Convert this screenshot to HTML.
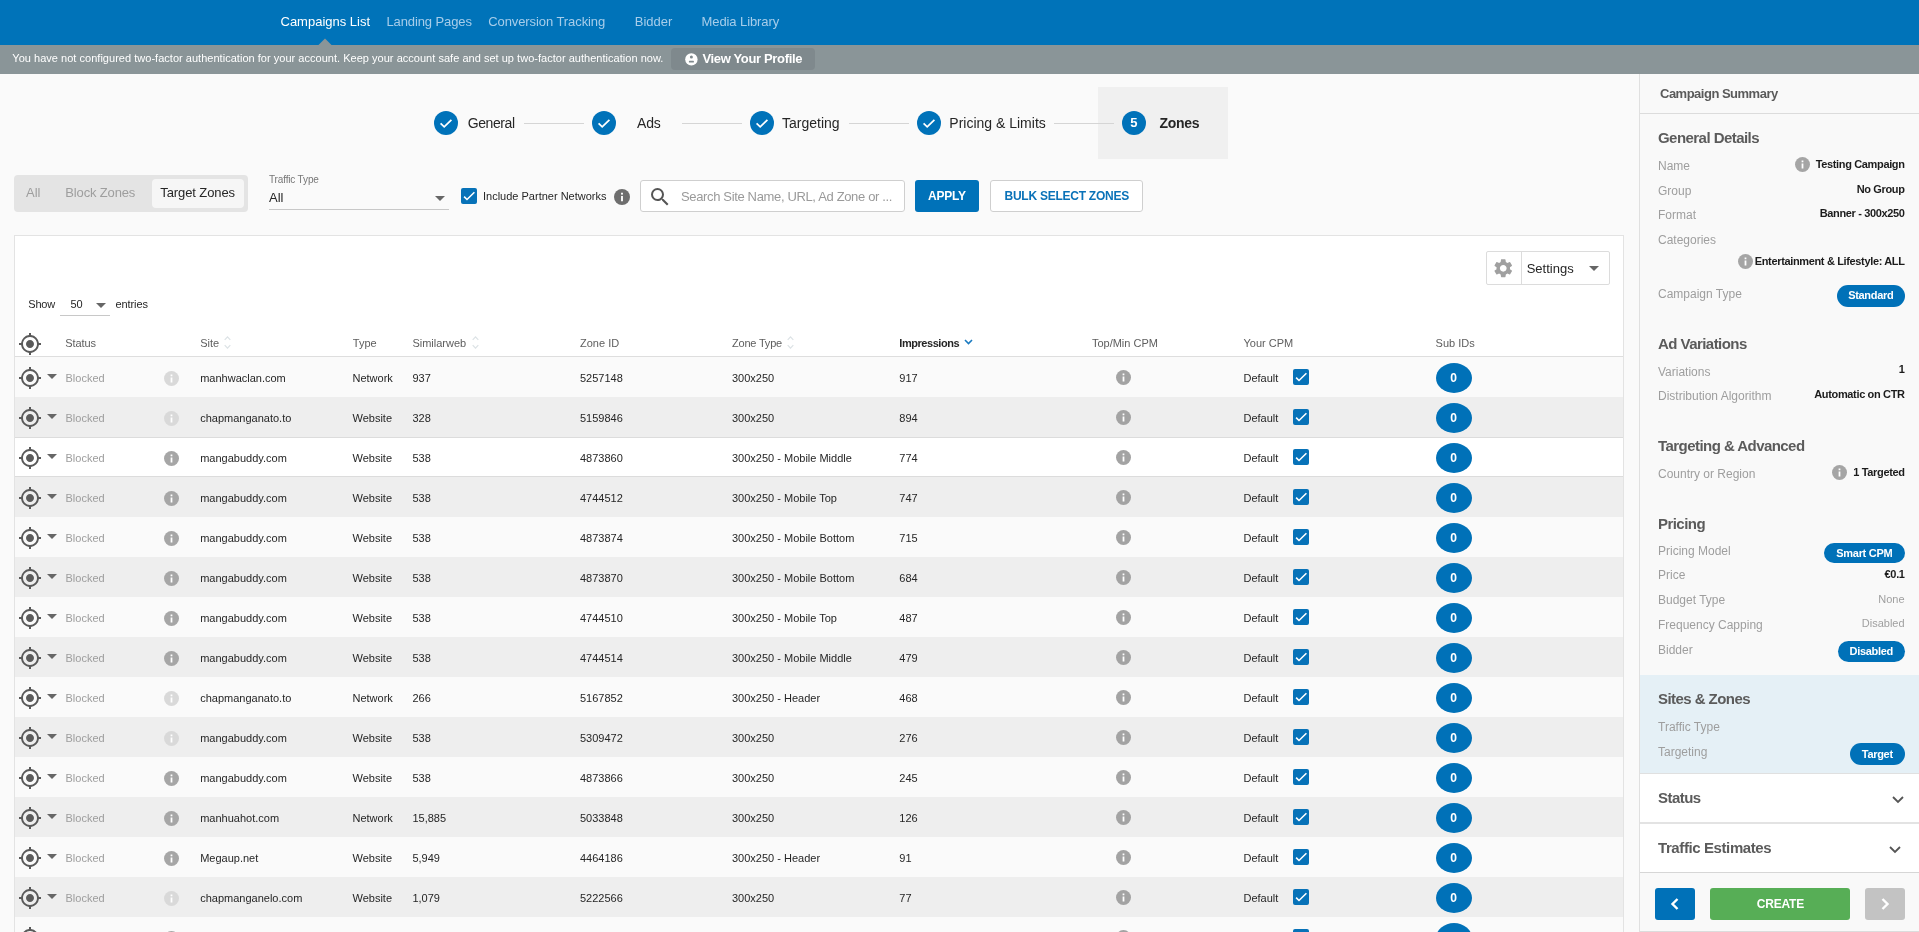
<!DOCTYPE html>
<html><head><meta charset="utf-8"><title>Zones</title>
<style>
html,body{margin:0;padding:0;width:1919px;height:932px;overflow:hidden;background:#fafafa;font-family:"Liberation Sans",sans-serif;}
#w{position:absolute;left:0;top:0;width:1919px;height:932px;will-change:transform;}
.r{position:absolute;box-sizing:content-box;}
.t{position:absolute;white-space:nowrap;}
</style></head><body><div id="w">
<div class="r" style="left:0px;top:0px;width:1919px;height:45px;background:#0073b9;"></div>
<div class="t" style="left:280.5px;top:13.50px;font-size:13px;line-height:15.6px;font-weight:400;color:#ffffff;">Campaigns List</div>
<div class="t" style="left:386.4px;top:13.50px;font-size:13px;line-height:15.6px;font-weight:400;color:#a6cdea;letter-spacing:-0.1px;">Landing Pages</div>
<div class="t" style="left:488.2px;top:13.50px;font-size:13px;line-height:15.6px;font-weight:400;color:#a6cdea;letter-spacing:-0.08px;">Conversion Tracking</div>
<div class="t" style="left:634.8px;top:13.50px;font-size:13px;line-height:15.6px;font-weight:400;color:#a6cdea;">Bidder</div>
<div class="t" style="left:701.6px;top:13.50px;font-size:13px;line-height:15.6px;font-weight:400;color:#a6cdea;letter-spacing:-0.1px;">Media Library</div>
<div class="r" style="left:0px;top:45px;width:1919px;height:29px;background:#8a9598;"></div>
<svg class="r" style="left:318px;top:38px" width="14" height="8"><path d="M0 7.5 L7 0.5 L14 7.5 Z" fill="#8a9598"/></svg>
<div class="t" style="left:12.3px;top:51.59px;font-size:11px;line-height:13.2px;font-weight:400;color:#ffffff;letter-spacing:0.025px;">You have not configured two-factor authentication for your account. Keep your account safe and set up two-factor authentication now.</div>
<div class="r" style="left:671px;top:48px;width:144px;height:22px;background:#7f898d;border-radius:4px;"></div>
<svg class="r" style="left:685px;top:52.5px" width="13" height="13"><circle cx="6.4" cy="6.4" r="6.2" fill="#fff"/><circle cx="6.4" cy="4.1" r="1.5" fill="#7f898d"/><rect x="3.9" y="7.7" width="5" height="1.8" rx="0.6" fill="#7f898d"/></svg>
<div class="t" style="left:702.5px;top:51.10px;font-size:13px;line-height:15.6px;font-weight:700;color:#ffffff;letter-spacing:-0.35px;">View Your Profile</div>
<div class="r" style="left:1098px;top:87px;width:130px;height:72px;background:#f0f0f0;"></div>
<div class="r" style="left:524px;top:123px;width:60px;height:1px;background:#d5d5d5;"></div>
<div class="r" style="left:682px;top:123px;width:60px;height:1px;background:#d5d5d5;"></div>
<div class="r" style="left:849px;top:123px;width:60px;height:1px;background:#d5d5d5;"></div>
<div class="r" style="left:1054px;top:123px;width:60px;height:1px;background:#d5d5d5;"></div>
<svg class="r" style="left:434px;top:111px" width="24" height="24"><circle cx="12" cy="12" r="12" fill="#0072b9"/><path d="M6.6 12.4 L10.2 15.8 L17.4 8.8" stroke="#fff" stroke-width="1.75" fill="none"/></svg>
<div class="t" style="left:467.7px;top:114.95px;font-size:14px;line-height:16.8px;font-weight:400;color:#262626;letter-spacing:-0.4px;">General</div>
<svg class="r" style="left:592px;top:111px" width="24" height="24"><circle cx="12" cy="12" r="12" fill="#0072b9"/><path d="M6.6 12.4 L10.2 15.8 L17.4 8.8" stroke="#fff" stroke-width="1.75" fill="none"/></svg>
<div class="t" style="left:637px;top:114.95px;font-size:14px;line-height:16.8px;font-weight:400;color:#262626;letter-spacing:-0.2px;">Ads</div>
<svg class="r" style="left:750px;top:111px" width="24" height="24"><circle cx="12" cy="12" r="12" fill="#0072b9"/><path d="M6.6 12.4 L10.2 15.8 L17.4 8.8" stroke="#fff" stroke-width="1.75" fill="none"/></svg>
<div class="t" style="left:782px;top:114.95px;font-size:14px;line-height:16.8px;font-weight:400;color:#262626;">Targeting</div>
<svg class="r" style="left:917px;top:111px" width="24" height="24"><circle cx="12" cy="12" r="12" fill="#0072b9"/><path d="M6.6 12.4 L10.2 15.8 L17.4 8.8" stroke="#fff" stroke-width="1.75" fill="none"/></svg>
<div class="t" style="left:949.3px;top:114.95px;font-size:14px;line-height:16.8px;font-weight:400;color:#262626;">Pricing &amp; Limits</div>
<svg class="r" style="left:1122px;top:111px" width="24" height="24"><circle cx="12" cy="12" r="12" fill="#0072b9"/></svg>
<div class="t" style="left:1130.3px;top:115.00px;font-size:13px;line-height:15.6px;font-weight:700;color:#ffffff;">5</div>
<div class="t" style="left:1159.6px;top:114.95px;font-size:14px;line-height:16.8px;font-weight:700;color:#262626;letter-spacing:-0.3px;">Zones</div>
<div class="r" style="left:14px;top:175px;width:234px;height:37px;background:#e4e4e4;border-radius:4px;"></div>
<div class="r" style="left:152px;top:179px;width:92px;height:29px;background:#f6f6f6;border-radius:4px;"></div>
<div class="t" style="left:26px;top:184.90px;font-size:13px;line-height:15.6px;font-weight:400;color:#9e9e9e;">All</div>
<div class="t" style="left:65.3px;top:184.90px;font-size:13px;line-height:15.6px;font-weight:400;color:#9e9e9e;letter-spacing:-0.15px;">Block Zones</div>
<div class="t" style="left:160.3px;top:184.90px;font-size:13px;line-height:15.6px;font-weight:400;color:#262626;letter-spacing:-0.1px;">Target Zones</div>
<div class="t" style="left:269px;top:173.84px;font-size:10px;line-height:12.0px;font-weight:400;color:#777777;letter-spacing:-0.15px;">Traffic Type</div>
<div class="t" style="left:269px;top:189.70px;font-size:13px;line-height:15.6px;font-weight:400;color:#262626;">All</div>
<svg class="r" style="left:435px;top:196px" width="10" height="5"><path d="M0 0 L10 0 L5 5Z" fill="#666"/></svg>
<div class="r" style="left:269px;top:209px;width:180px;height:1px;background:#c8c8c8;"></div>
<svg class="r" style="left:461px;top:188px" width="16" height="16"><rect x="0" y="0" width="16" height="16" rx="2" fill="#0772b8"/><path d="M3.1 8.6 L6 11.5 L13.4 4.3" stroke="#fff" stroke-width="1.6" fill="none"/></svg>
<div class="t" style="left:483px;top:189.99px;font-size:11px;line-height:13.2px;font-weight:400;color:#262626;">Include Partner Networks</div>
<svg class="r" style="left:613.7px;top:188.7px" width="16" height="16" viewBox="0 0 24 24"><circle cx="12" cy="12" r="12" fill="#6e6e6e"/><rect x="10.6" y="10.4" width="2.8" height="8" fill="#fff"/><rect x="10.6" y="5.6" width="2.8" height="2.8" fill="#fff"/></svg>
<div class="r" style="left:640px;top:180px;width:263px;height:30px;background:#fff;border:1px solid #cfcfcf;border-radius:3px;"></div>
<svg class="r" style="left:647.5px;top:185px" width="24" height="24" viewBox="0 0 24 24"><path d="M15.5 14h-.79l-.28-.27A6.471 6.471 0 0016 9.5 6.5 6.5 0 109.5 16c1.61 0 3.09-.59 4.23-1.57l.27.28v.79l5 4.99L20.49 19l-4.99-5zm-6 0C7.01 14 5 11.99 5 9.5S7.01 5 9.5 5 14 7.01 14 9.5 11.99 14 9.5 14z" fill="#555"/></svg>
<div class="t" style="left:681px;top:189.30px;font-size:13px;line-height:15.6px;font-weight:400;color:#9a9a9a;letter-spacing:-0.35px;">Search Site Name, URL, Ad Zone or ...</div>
<div class="r" style="left:915px;top:180px;width:64px;height:32px;background:#0072b9;border-radius:3px;"></div>
<div class="t" style="left:928px;top:189.44px;font-size:12px;line-height:14.4px;font-weight:700;color:#ffffff;letter-spacing:-0.2px;">APPLY</div>
<div class="r" style="left:990px;top:180px;width:151px;height:30px;background:#fff;border:1px solid #cfcfcf;border-radius:3px;"></div>
<div class="t" style="left:1004.5px;top:189.44px;font-size:12px;line-height:14.4px;font-weight:700;color:#0a72b8;letter-spacing:-0.25px;">BULK SELECT ZONES</div>
<div class="r" style="left:14px;top:235px;width:1608px;height:720px;background:#fff;border:1px solid #e3e3e3;"></div>
<div class="r" style="left:1486px;top:251px;width:122px;height:32px;background:#fff;border:1px solid #dcdcdc;border-radius:2px;"></div>
<div class="r" style="left:1521px;top:252px;width:1px;height:32px;background:#dcdcdc;"></div>
<svg class="r" style="left:1492.2px;top:257px" width="22.5" height="22.5" viewBox="0 0 24 24"><path d="M19.14 12.94c.04-.3.06-.61.06-.94 0-.32-.02-.64-.07-.94l2.03-1.58a.49.49 0 00.12-.61l-1.92-3.32a.488.488 0 00-.59-.22l-2.39.96c-.5-.38-1.03-.7-1.62-.94l-.36-2.54a.484.484 0 00-.48-.41h-3.84c-.24 0-.43.17-.47.41l-.36 2.54c-.59.24-1.13.57-1.62.94l-2.39-.96c-.22-.08-.47 0-.59.22L2.74 8.87c-.12.21-.08.47.12.61l2.03 1.58c-.05.3-.09.63-.09.94s.02.64.07.94l-2.03 1.58a.49.49 0 00-.12.61l1.92 3.32c.12.22.37.29.59.22l2.39-.96c.5.38 1.03.7 1.62.94l.36 2.54c.05.24.24.41.48.41h3.84c.24 0 .44-.17.47-.41l.36-2.54c.59-.24 1.13-.56 1.62-.94l2.39.96c.22.08.47 0 .59-.22l1.92-3.32c.12-.22.07-.47-.12-.61l-2.01-1.58zM12 15.6c-1.98 0-3.6-1.62-3.6-3.6s1.62-3.6 3.6-3.6 3.6 1.62 3.6 3.6-1.62 3.6-3.6 3.6z" fill="#a0a0a0"/></svg>
<div class="t" style="left:1526.7px;top:260.70px;font-size:13px;line-height:15.6px;font-weight:400;color:#262626;">Settings</div>
<svg class="r" style="left:1589px;top:266px" width="10" height="5"><path d="M0 0 L10 0 L5 5Z" fill="#666"/></svg>
<div class="t" style="left:28.3px;top:297.89px;font-size:11px;line-height:13.2px;font-weight:400;color:#262626;letter-spacing:-0.2px;">Show</div>
<div class="t" style="left:70.5px;top:297.89px;font-size:11px;line-height:13.2px;font-weight:400;color:#262626;">50</div>
<svg class="r" style="left:96px;top:302.5px" width="10" height="5"><path d="M0 0 L10 0 L5 5Z" fill="#666"/></svg>
<div class="r" style="left:60px;top:315px;width:50px;height:1px;background:#c8c8c8;"></div>
<div class="t" style="left:115.5px;top:297.89px;font-size:11px;line-height:13.2px;font-weight:400;color:#262626;letter-spacing:-0.1px;">entries</div>
<svg class="r" style="left:17.6px;top:331.8px" width="24" height="24" viewBox="0 0 24 24"><path d="M12 8c-2.21 0-4 1.79-4 4s1.79 4 4 4 4-1.79 4-4-1.79-4-4-4zm8.94 3A8.994 8.994 0 0013 3.06V1h-2v2.06A8.994 8.994 0 003.06 11H1v2h2.06A8.994 8.994 0 0011 20.94V23h2v-2.06A8.994 8.994 0 0020.94 13H23v-2h-2.06zM12 19c-3.87 0-7-3.13-7-7s3.13-7 7-7 7 3.13 7 7-3.13 7-7 7z" fill="#5a5a5a"/></svg>
<div class="t" style="left:65.3px;top:337.29px;font-size:11px;line-height:13.2px;font-weight:400;color:#5e5e5e;letter-spacing:-0.1px;">Status</div>
<div class="t" style="left:200.2px;top:337.29px;font-size:11px;line-height:13.2px;font-weight:400;color:#5e5e5e;">Site</div>
<svg class="r" style="left:224px;top:335.0px" width="7" height="14"><path d="M0.7 4.9 L3.5 1.9 L6.3 4.9 M0.7 10.1 L3.5 13.1 L6.3 10.1" stroke="#dde3e6" stroke-width="1.3" fill="none"/></svg>
<div class="t" style="left:352.8px;top:337.29px;font-size:11px;line-height:13.2px;font-weight:400;color:#5e5e5e;">Type</div>
<div class="t" style="left:412.4px;top:337.29px;font-size:11px;line-height:13.2px;font-weight:400;color:#5e5e5e;">Similarweb</div>
<svg class="r" style="left:471.5px;top:335.0px" width="7" height="14"><path d="M0.7 4.9 L3.5 1.9 L6.3 4.9 M0.7 10.1 L3.5 13.1 L6.3 10.1" stroke="#dde3e6" stroke-width="1.3" fill="none"/></svg>
<div class="t" style="left:580px;top:337.29px;font-size:11px;line-height:13.2px;font-weight:400;color:#5e5e5e;">Zone ID</div>
<div class="t" style="left:732px;top:337.29px;font-size:11px;line-height:13.2px;font-weight:400;color:#5e5e5e;letter-spacing:-0.2px;">Zone Type</div>
<svg class="r" style="left:787px;top:335.0px" width="7" height="14"><path d="M0.7 4.9 L3.5 1.9 L6.3 4.9 M0.7 10.1 L3.5 13.1 L6.3 10.1" stroke="#dde3e6" stroke-width="1.3" fill="none"/></svg>
<div class="t" style="left:899.3px;top:337.29px;font-size:11px;line-height:13.2px;font-weight:700;color:#262626;letter-spacing:-0.45px;">Impressions</div>
<svg class="r" style="left:963.5px;top:339px" width="9" height="6"><path d="M1 1 L4.5 4.5 L8 1" stroke="#1a7ac0" stroke-width="1.6" fill="none"/></svg>
<div class="t" style="left:1091.9px;top:337.29px;font-size:11px;line-height:13.2px;font-weight:400;color:#5e5e5e;">Top/Min CPM</div>
<div class="t" style="left:1243.5px;top:337.29px;font-size:11px;line-height:13.2px;font-weight:400;color:#5e5e5e;">Your CPM</div>
<div class="t" style="left:1435.6px;top:337.29px;font-size:11px;line-height:13.2px;font-weight:400;color:#5e5e5e;">Sub IDs</div>
<div class="r" style="left:15px;top:356px;width:1608px;height:1px;background:#dedede;"></div>
<div class="r" style="left:15px;top:357px;width:1608px;height:40px;background:#fafafa;"></div>
<svg class="r" style="left:17.6px;top:365.8px" width="24" height="24" viewBox="0 0 24 24"><path d="M12 8c-2.21 0-4 1.79-4 4s1.79 4 4 4 4-1.79 4-4-1.79-4-4-4zm8.94 3A8.994 8.994 0 0013 3.06V1h-2v2.06A8.994 8.994 0 003.06 11H1v2h2.06A8.994 8.994 0 0011 20.94V23h2v-2.06A8.994 8.994 0 0020.94 13H23v-2h-2.06zM12 19c-3.87 0-7-3.13-7-7s3.13-7 7-7 7 3.13 7 7-3.13 7-7 7z" fill="#5a5a5a"/></svg>
<svg class="r" style="left:47px;top:373.8px" width="10" height="5"><path d="M0 0 L10 0 L5 5Z" fill="#666"/></svg>
<div class="t" style="left:65.5px;top:371.59px;font-size:11px;line-height:13.2px;font-weight:400;color:#9d9d9d;">Blocked</div>
<svg class="r" style="left:164.1px;top:370.6px" width="15" height="15" viewBox="0 0 24 24"><circle cx="12" cy="12" r="12" fill="#d9d9d9"/><rect x="10.6" y="10.4" width="2.8" height="8" fill="#fff"/><rect x="10.6" y="5.6" width="2.8" height="2.8" fill="#fff"/></svg>
<div class="t" style="left:200.2px;top:371.59px;font-size:11px;line-height:13.2px;font-weight:400;color:#262626;">manhwaclan.com</div>
<div class="t" style="left:352.5px;top:371.59px;font-size:11px;line-height:13.2px;font-weight:400;color:#262626;">Network</div>
<div class="t" style="left:412.4px;top:371.59px;font-size:11px;line-height:13.2px;font-weight:400;color:#262626;">937</div>
<div class="t" style="left:580px;top:371.59px;font-size:11px;line-height:13.2px;font-weight:400;color:#262626;">5257148</div>
<div class="t" style="left:732px;top:371.59px;font-size:11px;line-height:13.2px;font-weight:400;color:#262626;">300x250</div>
<div class="t" style="left:899.3px;top:371.59px;font-size:11px;line-height:13.2px;font-weight:400;color:#262626;">917</div>
<svg class="r" style="left:1115.7px;top:370.3px" width="15" height="15" viewBox="0 0 24 24"><circle cx="12" cy="12" r="12" fill="#a3a3a3"/><rect x="10.6" y="10.4" width="2.8" height="8" fill="#fff"/><rect x="10.6" y="5.6" width="2.8" height="2.8" fill="#fff"/></svg>
<div class="t" style="left:1243.5px;top:371.59px;font-size:11px;line-height:13.2px;font-weight:400;color:#262626;">Default</div>
<svg class="r" style="left:1293px;top:369px" width="16" height="16"><rect x="0" y="0" width="16" height="16" rx="2" fill="#0772b8"/><path d="M3.1 8.6 L6 11.5 L13.4 4.3" stroke="#fff" stroke-width="1.6" fill="none"/></svg>
<div class="r" style="left:1436px;top:363px;width:36px;height:30px;background:#0071b8;border-radius:50%;"></div>
<div class="t" style="left:1450.3px;top:370.64px;font-size:12px;line-height:14.4px;font-weight:700;color:#ffffff;">0</div>
<div class="r" style="left:15px;top:397px;width:1608px;height:40px;background:#eeeeee;"></div>
<svg class="r" style="left:17.6px;top:405.8px" width="24" height="24" viewBox="0 0 24 24"><path d="M12 8c-2.21 0-4 1.79-4 4s1.79 4 4 4 4-1.79 4-4-1.79-4-4-4zm8.94 3A8.994 8.994 0 0013 3.06V1h-2v2.06A8.994 8.994 0 003.06 11H1v2h2.06A8.994 8.994 0 0011 20.94V23h2v-2.06A8.994 8.994 0 0020.94 13H23v-2h-2.06zM12 19c-3.87 0-7-3.13-7-7s3.13-7 7-7 7 3.13 7 7-3.13 7-7 7z" fill="#5a5a5a"/></svg>
<svg class="r" style="left:47px;top:413.8px" width="10" height="5"><path d="M0 0 L10 0 L5 5Z" fill="#666"/></svg>
<div class="t" style="left:65.5px;top:411.59px;font-size:11px;line-height:13.2px;font-weight:400;color:#9d9d9d;">Blocked</div>
<svg class="r" style="left:164.1px;top:410.6px" width="15" height="15" viewBox="0 0 24 24"><circle cx="12" cy="12" r="12" fill="#d9d9d9"/><rect x="10.6" y="10.4" width="2.8" height="8" fill="#fff"/><rect x="10.6" y="5.6" width="2.8" height="2.8" fill="#fff"/></svg>
<div class="t" style="left:200.2px;top:411.59px;font-size:11px;line-height:13.2px;font-weight:400;color:#262626;">chapmanganato.to</div>
<div class="t" style="left:352.5px;top:411.59px;font-size:11px;line-height:13.2px;font-weight:400;color:#262626;">Website</div>
<div class="t" style="left:412.4px;top:411.59px;font-size:11px;line-height:13.2px;font-weight:400;color:#262626;">328</div>
<div class="t" style="left:580px;top:411.59px;font-size:11px;line-height:13.2px;font-weight:400;color:#262626;">5159846</div>
<div class="t" style="left:732px;top:411.59px;font-size:11px;line-height:13.2px;font-weight:400;color:#262626;">300x250</div>
<div class="t" style="left:899.3px;top:411.59px;font-size:11px;line-height:13.2px;font-weight:400;color:#262626;">894</div>
<svg class="r" style="left:1115.7px;top:410.3px" width="15" height="15" viewBox="0 0 24 24"><circle cx="12" cy="12" r="12" fill="#a3a3a3"/><rect x="10.6" y="10.4" width="2.8" height="8" fill="#fff"/><rect x="10.6" y="5.6" width="2.8" height="2.8" fill="#fff"/></svg>
<div class="t" style="left:1243.5px;top:411.59px;font-size:11px;line-height:13.2px;font-weight:400;color:#262626;">Default</div>
<svg class="r" style="left:1293px;top:409px" width="16" height="16"><rect x="0" y="0" width="16" height="16" rx="2" fill="#0772b8"/><path d="M3.1 8.6 L6 11.5 L13.4 4.3" stroke="#fff" stroke-width="1.6" fill="none"/></svg>
<div class="r" style="left:1436px;top:403px;width:36px;height:30px;background:#0071b8;border-radius:50%;"></div>
<div class="t" style="left:1450.3px;top:410.64px;font-size:12px;line-height:14.4px;font-weight:700;color:#ffffff;">0</div>
<div class="r" style="left:15px;top:437px;width:1608px;height:40px;background:#ffffff;"></div>
<svg class="r" style="left:17.6px;top:445.8px" width="24" height="24" viewBox="0 0 24 24"><path d="M12 8c-2.21 0-4 1.79-4 4s1.79 4 4 4 4-1.79 4-4-1.79-4-4-4zm8.94 3A8.994 8.994 0 0013 3.06V1h-2v2.06A8.994 8.994 0 003.06 11H1v2h2.06A8.994 8.994 0 0011 20.94V23h2v-2.06A8.994 8.994 0 0020.94 13H23v-2h-2.06zM12 19c-3.87 0-7-3.13-7-7s3.13-7 7-7 7 3.13 7 7-3.13 7-7 7z" fill="#5a5a5a"/></svg>
<svg class="r" style="left:47px;top:453.8px" width="10" height="5"><path d="M0 0 L10 0 L5 5Z" fill="#666"/></svg>
<div class="t" style="left:65.5px;top:451.59px;font-size:11px;line-height:13.2px;font-weight:400;color:#9d9d9d;">Blocked</div>
<svg class="r" style="left:164.1px;top:450.6px" width="15" height="15" viewBox="0 0 24 24"><circle cx="12" cy="12" r="12" fill="#a6a6a6"/><rect x="10.6" y="10.4" width="2.8" height="8" fill="#fff"/><rect x="10.6" y="5.6" width="2.8" height="2.8" fill="#fff"/></svg>
<div class="t" style="left:200.2px;top:451.59px;font-size:11px;line-height:13.2px;font-weight:400;color:#262626;">mangabuddy.com</div>
<div class="t" style="left:352.5px;top:451.59px;font-size:11px;line-height:13.2px;font-weight:400;color:#262626;">Website</div>
<div class="t" style="left:412.4px;top:451.59px;font-size:11px;line-height:13.2px;font-weight:400;color:#262626;">538</div>
<div class="t" style="left:580px;top:451.59px;font-size:11px;line-height:13.2px;font-weight:400;color:#262626;">4873860</div>
<div class="t" style="left:732px;top:451.59px;font-size:11px;line-height:13.2px;font-weight:400;color:#262626;">300x250 - Mobile Middle</div>
<div class="t" style="left:899.3px;top:451.59px;font-size:11px;line-height:13.2px;font-weight:400;color:#262626;">774</div>
<svg class="r" style="left:1115.7px;top:450.3px" width="15" height="15" viewBox="0 0 24 24"><circle cx="12" cy="12" r="12" fill="#a3a3a3"/><rect x="10.6" y="10.4" width="2.8" height="8" fill="#fff"/><rect x="10.6" y="5.6" width="2.8" height="2.8" fill="#fff"/></svg>
<div class="t" style="left:1243.5px;top:451.59px;font-size:11px;line-height:13.2px;font-weight:400;color:#262626;">Default</div>
<svg class="r" style="left:1293px;top:449px" width="16" height="16"><rect x="0" y="0" width="16" height="16" rx="2" fill="#0772b8"/><path d="M3.1 8.6 L6 11.5 L13.4 4.3" stroke="#fff" stroke-width="1.6" fill="none"/></svg>
<div class="r" style="left:1436px;top:443px;width:36px;height:30px;background:#0071b8;border-radius:50%;"></div>
<div class="t" style="left:1450.3px;top:450.64px;font-size:12px;line-height:14.4px;font-weight:700;color:#ffffff;">0</div>
<div class="r" style="left:15px;top:477px;width:1608px;height:40px;background:#eeeeee;"></div>
<svg class="r" style="left:17.6px;top:485.8px" width="24" height="24" viewBox="0 0 24 24"><path d="M12 8c-2.21 0-4 1.79-4 4s1.79 4 4 4 4-1.79 4-4-1.79-4-4-4zm8.94 3A8.994 8.994 0 0013 3.06V1h-2v2.06A8.994 8.994 0 003.06 11H1v2h2.06A8.994 8.994 0 0011 20.94V23h2v-2.06A8.994 8.994 0 0020.94 13H23v-2h-2.06zM12 19c-3.87 0-7-3.13-7-7s3.13-7 7-7 7 3.13 7 7-3.13 7-7 7z" fill="#5a5a5a"/></svg>
<svg class="r" style="left:47px;top:493.8px" width="10" height="5"><path d="M0 0 L10 0 L5 5Z" fill="#666"/></svg>
<div class="t" style="left:65.5px;top:491.59px;font-size:11px;line-height:13.2px;font-weight:400;color:#9d9d9d;">Blocked</div>
<svg class="r" style="left:164.1px;top:490.6px" width="15" height="15" viewBox="0 0 24 24"><circle cx="12" cy="12" r="12" fill="#a6a6a6"/><rect x="10.6" y="10.4" width="2.8" height="8" fill="#fff"/><rect x="10.6" y="5.6" width="2.8" height="2.8" fill="#fff"/></svg>
<div class="t" style="left:200.2px;top:491.59px;font-size:11px;line-height:13.2px;font-weight:400;color:#262626;">mangabuddy.com</div>
<div class="t" style="left:352.5px;top:491.59px;font-size:11px;line-height:13.2px;font-weight:400;color:#262626;">Website</div>
<div class="t" style="left:412.4px;top:491.59px;font-size:11px;line-height:13.2px;font-weight:400;color:#262626;">538</div>
<div class="t" style="left:580px;top:491.59px;font-size:11px;line-height:13.2px;font-weight:400;color:#262626;">4744512</div>
<div class="t" style="left:732px;top:491.59px;font-size:11px;line-height:13.2px;font-weight:400;color:#262626;">300x250 - Mobile Top</div>
<div class="t" style="left:899.3px;top:491.59px;font-size:11px;line-height:13.2px;font-weight:400;color:#262626;">747</div>
<svg class="r" style="left:1115.7px;top:490.3px" width="15" height="15" viewBox="0 0 24 24"><circle cx="12" cy="12" r="12" fill="#a3a3a3"/><rect x="10.6" y="10.4" width="2.8" height="8" fill="#fff"/><rect x="10.6" y="5.6" width="2.8" height="2.8" fill="#fff"/></svg>
<div class="t" style="left:1243.5px;top:491.59px;font-size:11px;line-height:13.2px;font-weight:400;color:#262626;">Default</div>
<svg class="r" style="left:1293px;top:489px" width="16" height="16"><rect x="0" y="0" width="16" height="16" rx="2" fill="#0772b8"/><path d="M3.1 8.6 L6 11.5 L13.4 4.3" stroke="#fff" stroke-width="1.6" fill="none"/></svg>
<div class="r" style="left:1436px;top:483px;width:36px;height:30px;background:#0071b8;border-radius:50%;"></div>
<div class="t" style="left:1450.3px;top:490.64px;font-size:12px;line-height:14.4px;font-weight:700;color:#ffffff;">0</div>
<div class="r" style="left:15px;top:517px;width:1608px;height:40px;background:#fafafa;"></div>
<svg class="r" style="left:17.6px;top:525.8px" width="24" height="24" viewBox="0 0 24 24"><path d="M12 8c-2.21 0-4 1.79-4 4s1.79 4 4 4 4-1.79 4-4-1.79-4-4-4zm8.94 3A8.994 8.994 0 0013 3.06V1h-2v2.06A8.994 8.994 0 003.06 11H1v2h2.06A8.994 8.994 0 0011 20.94V23h2v-2.06A8.994 8.994 0 0020.94 13H23v-2h-2.06zM12 19c-3.87 0-7-3.13-7-7s3.13-7 7-7 7 3.13 7 7-3.13 7-7 7z" fill="#5a5a5a"/></svg>
<svg class="r" style="left:47px;top:533.8px" width="10" height="5"><path d="M0 0 L10 0 L5 5Z" fill="#666"/></svg>
<div class="t" style="left:65.5px;top:531.59px;font-size:11px;line-height:13.2px;font-weight:400;color:#9d9d9d;">Blocked</div>
<svg class="r" style="left:164.1px;top:530.5999999999999px" width="15" height="15" viewBox="0 0 24 24"><circle cx="12" cy="12" r="12" fill="#a6a6a6"/><rect x="10.6" y="10.4" width="2.8" height="8" fill="#fff"/><rect x="10.6" y="5.6" width="2.8" height="2.8" fill="#fff"/></svg>
<div class="t" style="left:200.2px;top:531.59px;font-size:11px;line-height:13.2px;font-weight:400;color:#262626;">mangabuddy.com</div>
<div class="t" style="left:352.5px;top:531.59px;font-size:11px;line-height:13.2px;font-weight:400;color:#262626;">Website</div>
<div class="t" style="left:412.4px;top:531.59px;font-size:11px;line-height:13.2px;font-weight:400;color:#262626;">538</div>
<div class="t" style="left:580px;top:531.59px;font-size:11px;line-height:13.2px;font-weight:400;color:#262626;">4873874</div>
<div class="t" style="left:732px;top:531.59px;font-size:11px;line-height:13.2px;font-weight:400;color:#262626;">300x250 - Mobile Bottom</div>
<div class="t" style="left:899.3px;top:531.59px;font-size:11px;line-height:13.2px;font-weight:400;color:#262626;">715</div>
<svg class="r" style="left:1115.7px;top:530.3px" width="15" height="15" viewBox="0 0 24 24"><circle cx="12" cy="12" r="12" fill="#a3a3a3"/><rect x="10.6" y="10.4" width="2.8" height="8" fill="#fff"/><rect x="10.6" y="5.6" width="2.8" height="2.8" fill="#fff"/></svg>
<div class="t" style="left:1243.5px;top:531.59px;font-size:11px;line-height:13.2px;font-weight:400;color:#262626;">Default</div>
<svg class="r" style="left:1293px;top:529px" width="16" height="16"><rect x="0" y="0" width="16" height="16" rx="2" fill="#0772b8"/><path d="M3.1 8.6 L6 11.5 L13.4 4.3" stroke="#fff" stroke-width="1.6" fill="none"/></svg>
<div class="r" style="left:1436px;top:523px;width:36px;height:30px;background:#0071b8;border-radius:50%;"></div>
<div class="t" style="left:1450.3px;top:530.64px;font-size:12px;line-height:14.4px;font-weight:700;color:#ffffff;">0</div>
<div class="r" style="left:15px;top:557px;width:1608px;height:40px;background:#eeeeee;"></div>
<svg class="r" style="left:17.6px;top:565.8px" width="24" height="24" viewBox="0 0 24 24"><path d="M12 8c-2.21 0-4 1.79-4 4s1.79 4 4 4 4-1.79 4-4-1.79-4-4-4zm8.94 3A8.994 8.994 0 0013 3.06V1h-2v2.06A8.994 8.994 0 003.06 11H1v2h2.06A8.994 8.994 0 0011 20.94V23h2v-2.06A8.994 8.994 0 0020.94 13H23v-2h-2.06zM12 19c-3.87 0-7-3.13-7-7s3.13-7 7-7 7 3.13 7 7-3.13 7-7 7z" fill="#5a5a5a"/></svg>
<svg class="r" style="left:47px;top:573.8px" width="10" height="5"><path d="M0 0 L10 0 L5 5Z" fill="#666"/></svg>
<div class="t" style="left:65.5px;top:571.59px;font-size:11px;line-height:13.2px;font-weight:400;color:#9d9d9d;">Blocked</div>
<svg class="r" style="left:164.1px;top:570.5999999999999px" width="15" height="15" viewBox="0 0 24 24"><circle cx="12" cy="12" r="12" fill="#a6a6a6"/><rect x="10.6" y="10.4" width="2.8" height="8" fill="#fff"/><rect x="10.6" y="5.6" width="2.8" height="2.8" fill="#fff"/></svg>
<div class="t" style="left:200.2px;top:571.59px;font-size:11px;line-height:13.2px;font-weight:400;color:#262626;">mangabuddy.com</div>
<div class="t" style="left:352.5px;top:571.59px;font-size:11px;line-height:13.2px;font-weight:400;color:#262626;">Website</div>
<div class="t" style="left:412.4px;top:571.59px;font-size:11px;line-height:13.2px;font-weight:400;color:#262626;">538</div>
<div class="t" style="left:580px;top:571.59px;font-size:11px;line-height:13.2px;font-weight:400;color:#262626;">4873870</div>
<div class="t" style="left:732px;top:571.59px;font-size:11px;line-height:13.2px;font-weight:400;color:#262626;">300x250 - Mobile Bottom</div>
<div class="t" style="left:899.3px;top:571.59px;font-size:11px;line-height:13.2px;font-weight:400;color:#262626;">684</div>
<svg class="r" style="left:1115.7px;top:570.3px" width="15" height="15" viewBox="0 0 24 24"><circle cx="12" cy="12" r="12" fill="#a3a3a3"/><rect x="10.6" y="10.4" width="2.8" height="8" fill="#fff"/><rect x="10.6" y="5.6" width="2.8" height="2.8" fill="#fff"/></svg>
<div class="t" style="left:1243.5px;top:571.59px;font-size:11px;line-height:13.2px;font-weight:400;color:#262626;">Default</div>
<svg class="r" style="left:1293px;top:569px" width="16" height="16"><rect x="0" y="0" width="16" height="16" rx="2" fill="#0772b8"/><path d="M3.1 8.6 L6 11.5 L13.4 4.3" stroke="#fff" stroke-width="1.6" fill="none"/></svg>
<div class="r" style="left:1436px;top:563px;width:36px;height:30px;background:#0071b8;border-radius:50%;"></div>
<div class="t" style="left:1450.3px;top:570.64px;font-size:12px;line-height:14.4px;font-weight:700;color:#ffffff;">0</div>
<div class="r" style="left:15px;top:597px;width:1608px;height:40px;background:#fafafa;"></div>
<svg class="r" style="left:17.6px;top:605.8px" width="24" height="24" viewBox="0 0 24 24"><path d="M12 8c-2.21 0-4 1.79-4 4s1.79 4 4 4 4-1.79 4-4-1.79-4-4-4zm8.94 3A8.994 8.994 0 0013 3.06V1h-2v2.06A8.994 8.994 0 003.06 11H1v2h2.06A8.994 8.994 0 0011 20.94V23h2v-2.06A8.994 8.994 0 0020.94 13H23v-2h-2.06zM12 19c-3.87 0-7-3.13-7-7s3.13-7 7-7 7 3.13 7 7-3.13 7-7 7z" fill="#5a5a5a"/></svg>
<svg class="r" style="left:47px;top:613.8px" width="10" height="5"><path d="M0 0 L10 0 L5 5Z" fill="#666"/></svg>
<div class="t" style="left:65.5px;top:611.59px;font-size:11px;line-height:13.2px;font-weight:400;color:#9d9d9d;">Blocked</div>
<svg class="r" style="left:164.1px;top:610.5999999999999px" width="15" height="15" viewBox="0 0 24 24"><circle cx="12" cy="12" r="12" fill="#a6a6a6"/><rect x="10.6" y="10.4" width="2.8" height="8" fill="#fff"/><rect x="10.6" y="5.6" width="2.8" height="2.8" fill="#fff"/></svg>
<div class="t" style="left:200.2px;top:611.59px;font-size:11px;line-height:13.2px;font-weight:400;color:#262626;">mangabuddy.com</div>
<div class="t" style="left:352.5px;top:611.59px;font-size:11px;line-height:13.2px;font-weight:400;color:#262626;">Website</div>
<div class="t" style="left:412.4px;top:611.59px;font-size:11px;line-height:13.2px;font-weight:400;color:#262626;">538</div>
<div class="t" style="left:580px;top:611.59px;font-size:11px;line-height:13.2px;font-weight:400;color:#262626;">4744510</div>
<div class="t" style="left:732px;top:611.59px;font-size:11px;line-height:13.2px;font-weight:400;color:#262626;">300x250 - Mobile Top</div>
<div class="t" style="left:899.3px;top:611.59px;font-size:11px;line-height:13.2px;font-weight:400;color:#262626;">487</div>
<svg class="r" style="left:1115.7px;top:610.3px" width="15" height="15" viewBox="0 0 24 24"><circle cx="12" cy="12" r="12" fill="#a3a3a3"/><rect x="10.6" y="10.4" width="2.8" height="8" fill="#fff"/><rect x="10.6" y="5.6" width="2.8" height="2.8" fill="#fff"/></svg>
<div class="t" style="left:1243.5px;top:611.59px;font-size:11px;line-height:13.2px;font-weight:400;color:#262626;">Default</div>
<svg class="r" style="left:1293px;top:609px" width="16" height="16"><rect x="0" y="0" width="16" height="16" rx="2" fill="#0772b8"/><path d="M3.1 8.6 L6 11.5 L13.4 4.3" stroke="#fff" stroke-width="1.6" fill="none"/></svg>
<div class="r" style="left:1436px;top:603px;width:36px;height:30px;background:#0071b8;border-radius:50%;"></div>
<div class="t" style="left:1450.3px;top:610.64px;font-size:12px;line-height:14.4px;font-weight:700;color:#ffffff;">0</div>
<div class="r" style="left:15px;top:637px;width:1608px;height:40px;background:#eeeeee;"></div>
<svg class="r" style="left:17.6px;top:645.8px" width="24" height="24" viewBox="0 0 24 24"><path d="M12 8c-2.21 0-4 1.79-4 4s1.79 4 4 4 4-1.79 4-4-1.79-4-4-4zm8.94 3A8.994 8.994 0 0013 3.06V1h-2v2.06A8.994 8.994 0 003.06 11H1v2h2.06A8.994 8.994 0 0011 20.94V23h2v-2.06A8.994 8.994 0 0020.94 13H23v-2h-2.06zM12 19c-3.87 0-7-3.13-7-7s3.13-7 7-7 7 3.13 7 7-3.13 7-7 7z" fill="#5a5a5a"/></svg>
<svg class="r" style="left:47px;top:653.8px" width="10" height="5"><path d="M0 0 L10 0 L5 5Z" fill="#666"/></svg>
<div class="t" style="left:65.5px;top:651.59px;font-size:11px;line-height:13.2px;font-weight:400;color:#9d9d9d;">Blocked</div>
<svg class="r" style="left:164.1px;top:650.5999999999999px" width="15" height="15" viewBox="0 0 24 24"><circle cx="12" cy="12" r="12" fill="#a6a6a6"/><rect x="10.6" y="10.4" width="2.8" height="8" fill="#fff"/><rect x="10.6" y="5.6" width="2.8" height="2.8" fill="#fff"/></svg>
<div class="t" style="left:200.2px;top:651.59px;font-size:11px;line-height:13.2px;font-weight:400;color:#262626;">mangabuddy.com</div>
<div class="t" style="left:352.5px;top:651.59px;font-size:11px;line-height:13.2px;font-weight:400;color:#262626;">Website</div>
<div class="t" style="left:412.4px;top:651.59px;font-size:11px;line-height:13.2px;font-weight:400;color:#262626;">538</div>
<div class="t" style="left:580px;top:651.59px;font-size:11px;line-height:13.2px;font-weight:400;color:#262626;">4744514</div>
<div class="t" style="left:732px;top:651.59px;font-size:11px;line-height:13.2px;font-weight:400;color:#262626;">300x250 - Mobile Middle</div>
<div class="t" style="left:899.3px;top:651.59px;font-size:11px;line-height:13.2px;font-weight:400;color:#262626;">479</div>
<svg class="r" style="left:1115.7px;top:650.3px" width="15" height="15" viewBox="0 0 24 24"><circle cx="12" cy="12" r="12" fill="#a3a3a3"/><rect x="10.6" y="10.4" width="2.8" height="8" fill="#fff"/><rect x="10.6" y="5.6" width="2.8" height="2.8" fill="#fff"/></svg>
<div class="t" style="left:1243.5px;top:651.59px;font-size:11px;line-height:13.2px;font-weight:400;color:#262626;">Default</div>
<svg class="r" style="left:1293px;top:649px" width="16" height="16"><rect x="0" y="0" width="16" height="16" rx="2" fill="#0772b8"/><path d="M3.1 8.6 L6 11.5 L13.4 4.3" stroke="#fff" stroke-width="1.6" fill="none"/></svg>
<div class="r" style="left:1436px;top:643px;width:36px;height:30px;background:#0071b8;border-radius:50%;"></div>
<div class="t" style="left:1450.3px;top:650.64px;font-size:12px;line-height:14.4px;font-weight:700;color:#ffffff;">0</div>
<div class="r" style="left:15px;top:677px;width:1608px;height:40px;background:#fafafa;"></div>
<svg class="r" style="left:17.6px;top:685.8px" width="24" height="24" viewBox="0 0 24 24"><path d="M12 8c-2.21 0-4 1.79-4 4s1.79 4 4 4 4-1.79 4-4-1.79-4-4-4zm8.94 3A8.994 8.994 0 0013 3.06V1h-2v2.06A8.994 8.994 0 003.06 11H1v2h2.06A8.994 8.994 0 0011 20.94V23h2v-2.06A8.994 8.994 0 0020.94 13H23v-2h-2.06zM12 19c-3.87 0-7-3.13-7-7s3.13-7 7-7 7 3.13 7 7-3.13 7-7 7z" fill="#5a5a5a"/></svg>
<svg class="r" style="left:47px;top:693.8px" width="10" height="5"><path d="M0 0 L10 0 L5 5Z" fill="#666"/></svg>
<div class="t" style="left:65.5px;top:691.59px;font-size:11px;line-height:13.2px;font-weight:400;color:#9d9d9d;">Blocked</div>
<svg class="r" style="left:164.1px;top:690.5999999999999px" width="15" height="15" viewBox="0 0 24 24"><circle cx="12" cy="12" r="12" fill="#d9d9d9"/><rect x="10.6" y="10.4" width="2.8" height="8" fill="#fff"/><rect x="10.6" y="5.6" width="2.8" height="2.8" fill="#fff"/></svg>
<div class="t" style="left:200.2px;top:691.59px;font-size:11px;line-height:13.2px;font-weight:400;color:#262626;">chapmanganato.to</div>
<div class="t" style="left:352.5px;top:691.59px;font-size:11px;line-height:13.2px;font-weight:400;color:#262626;">Network</div>
<div class="t" style="left:412.4px;top:691.59px;font-size:11px;line-height:13.2px;font-weight:400;color:#262626;">266</div>
<div class="t" style="left:580px;top:691.59px;font-size:11px;line-height:13.2px;font-weight:400;color:#262626;">5167852</div>
<div class="t" style="left:732px;top:691.59px;font-size:11px;line-height:13.2px;font-weight:400;color:#262626;">300x250 - Header</div>
<div class="t" style="left:899.3px;top:691.59px;font-size:11px;line-height:13.2px;font-weight:400;color:#262626;">468</div>
<svg class="r" style="left:1115.7px;top:690.3px" width="15" height="15" viewBox="0 0 24 24"><circle cx="12" cy="12" r="12" fill="#a3a3a3"/><rect x="10.6" y="10.4" width="2.8" height="8" fill="#fff"/><rect x="10.6" y="5.6" width="2.8" height="2.8" fill="#fff"/></svg>
<div class="t" style="left:1243.5px;top:691.59px;font-size:11px;line-height:13.2px;font-weight:400;color:#262626;">Default</div>
<svg class="r" style="left:1293px;top:689px" width="16" height="16"><rect x="0" y="0" width="16" height="16" rx="2" fill="#0772b8"/><path d="M3.1 8.6 L6 11.5 L13.4 4.3" stroke="#fff" stroke-width="1.6" fill="none"/></svg>
<div class="r" style="left:1436px;top:683px;width:36px;height:30px;background:#0071b8;border-radius:50%;"></div>
<div class="t" style="left:1450.3px;top:690.64px;font-size:12px;line-height:14.4px;font-weight:700;color:#ffffff;">0</div>
<div class="r" style="left:15px;top:717px;width:1608px;height:40px;background:#eeeeee;"></div>
<svg class="r" style="left:17.6px;top:725.8px" width="24" height="24" viewBox="0 0 24 24"><path d="M12 8c-2.21 0-4 1.79-4 4s1.79 4 4 4 4-1.79 4-4-1.79-4-4-4zm8.94 3A8.994 8.994 0 0013 3.06V1h-2v2.06A8.994 8.994 0 003.06 11H1v2h2.06A8.994 8.994 0 0011 20.94V23h2v-2.06A8.994 8.994 0 0020.94 13H23v-2h-2.06zM12 19c-3.87 0-7-3.13-7-7s3.13-7 7-7 7 3.13 7 7-3.13 7-7 7z" fill="#5a5a5a"/></svg>
<svg class="r" style="left:47px;top:733.8px" width="10" height="5"><path d="M0 0 L10 0 L5 5Z" fill="#666"/></svg>
<div class="t" style="left:65.5px;top:731.59px;font-size:11px;line-height:13.2px;font-weight:400;color:#9d9d9d;">Blocked</div>
<svg class="r" style="left:164.1px;top:730.5999999999999px" width="15" height="15" viewBox="0 0 24 24"><circle cx="12" cy="12" r="12" fill="#d9d9d9"/><rect x="10.6" y="10.4" width="2.8" height="8" fill="#fff"/><rect x="10.6" y="5.6" width="2.8" height="2.8" fill="#fff"/></svg>
<div class="t" style="left:200.2px;top:731.59px;font-size:11px;line-height:13.2px;font-weight:400;color:#262626;">mangabuddy.com</div>
<div class="t" style="left:352.5px;top:731.59px;font-size:11px;line-height:13.2px;font-weight:400;color:#262626;">Website</div>
<div class="t" style="left:412.4px;top:731.59px;font-size:11px;line-height:13.2px;font-weight:400;color:#262626;">538</div>
<div class="t" style="left:580px;top:731.59px;font-size:11px;line-height:13.2px;font-weight:400;color:#262626;">5309472</div>
<div class="t" style="left:732px;top:731.59px;font-size:11px;line-height:13.2px;font-weight:400;color:#262626;">300x250</div>
<div class="t" style="left:899.3px;top:731.59px;font-size:11px;line-height:13.2px;font-weight:400;color:#262626;">276</div>
<svg class="r" style="left:1115.7px;top:730.3px" width="15" height="15" viewBox="0 0 24 24"><circle cx="12" cy="12" r="12" fill="#a3a3a3"/><rect x="10.6" y="10.4" width="2.8" height="8" fill="#fff"/><rect x="10.6" y="5.6" width="2.8" height="2.8" fill="#fff"/></svg>
<div class="t" style="left:1243.5px;top:731.59px;font-size:11px;line-height:13.2px;font-weight:400;color:#262626;">Default</div>
<svg class="r" style="left:1293px;top:729px" width="16" height="16"><rect x="0" y="0" width="16" height="16" rx="2" fill="#0772b8"/><path d="M3.1 8.6 L6 11.5 L13.4 4.3" stroke="#fff" stroke-width="1.6" fill="none"/></svg>
<div class="r" style="left:1436px;top:723px;width:36px;height:30px;background:#0071b8;border-radius:50%;"></div>
<div class="t" style="left:1450.3px;top:730.64px;font-size:12px;line-height:14.4px;font-weight:700;color:#ffffff;">0</div>
<div class="r" style="left:15px;top:757px;width:1608px;height:40px;background:#fafafa;"></div>
<svg class="r" style="left:17.6px;top:765.8px" width="24" height="24" viewBox="0 0 24 24"><path d="M12 8c-2.21 0-4 1.79-4 4s1.79 4 4 4 4-1.79 4-4-1.79-4-4-4zm8.94 3A8.994 8.994 0 0013 3.06V1h-2v2.06A8.994 8.994 0 003.06 11H1v2h2.06A8.994 8.994 0 0011 20.94V23h2v-2.06A8.994 8.994 0 0020.94 13H23v-2h-2.06zM12 19c-3.87 0-7-3.13-7-7s3.13-7 7-7 7 3.13 7 7-3.13 7-7 7z" fill="#5a5a5a"/></svg>
<svg class="r" style="left:47px;top:773.8px" width="10" height="5"><path d="M0 0 L10 0 L5 5Z" fill="#666"/></svg>
<div class="t" style="left:65.5px;top:771.59px;font-size:11px;line-height:13.2px;font-weight:400;color:#9d9d9d;">Blocked</div>
<svg class="r" style="left:164.1px;top:770.5999999999999px" width="15" height="15" viewBox="0 0 24 24"><circle cx="12" cy="12" r="12" fill="#a6a6a6"/><rect x="10.6" y="10.4" width="2.8" height="8" fill="#fff"/><rect x="10.6" y="5.6" width="2.8" height="2.8" fill="#fff"/></svg>
<div class="t" style="left:200.2px;top:771.59px;font-size:11px;line-height:13.2px;font-weight:400;color:#262626;">mangabuddy.com</div>
<div class="t" style="left:352.5px;top:771.59px;font-size:11px;line-height:13.2px;font-weight:400;color:#262626;">Website</div>
<div class="t" style="left:412.4px;top:771.59px;font-size:11px;line-height:13.2px;font-weight:400;color:#262626;">538</div>
<div class="t" style="left:580px;top:771.59px;font-size:11px;line-height:13.2px;font-weight:400;color:#262626;">4873866</div>
<div class="t" style="left:732px;top:771.59px;font-size:11px;line-height:13.2px;font-weight:400;color:#262626;">300x250</div>
<div class="t" style="left:899.3px;top:771.59px;font-size:11px;line-height:13.2px;font-weight:400;color:#262626;">245</div>
<svg class="r" style="left:1115.7px;top:770.3px" width="15" height="15" viewBox="0 0 24 24"><circle cx="12" cy="12" r="12" fill="#a3a3a3"/><rect x="10.6" y="10.4" width="2.8" height="8" fill="#fff"/><rect x="10.6" y="5.6" width="2.8" height="2.8" fill="#fff"/></svg>
<div class="t" style="left:1243.5px;top:771.59px;font-size:11px;line-height:13.2px;font-weight:400;color:#262626;">Default</div>
<svg class="r" style="left:1293px;top:769px" width="16" height="16"><rect x="0" y="0" width="16" height="16" rx="2" fill="#0772b8"/><path d="M3.1 8.6 L6 11.5 L13.4 4.3" stroke="#fff" stroke-width="1.6" fill="none"/></svg>
<div class="r" style="left:1436px;top:763px;width:36px;height:30px;background:#0071b8;border-radius:50%;"></div>
<div class="t" style="left:1450.3px;top:770.64px;font-size:12px;line-height:14.4px;font-weight:700;color:#ffffff;">0</div>
<div class="r" style="left:15px;top:797px;width:1608px;height:40px;background:#eeeeee;"></div>
<svg class="r" style="left:17.6px;top:805.8px" width="24" height="24" viewBox="0 0 24 24"><path d="M12 8c-2.21 0-4 1.79-4 4s1.79 4 4 4 4-1.79 4-4-1.79-4-4-4zm8.94 3A8.994 8.994 0 0013 3.06V1h-2v2.06A8.994 8.994 0 003.06 11H1v2h2.06A8.994 8.994 0 0011 20.94V23h2v-2.06A8.994 8.994 0 0020.94 13H23v-2h-2.06zM12 19c-3.87 0-7-3.13-7-7s3.13-7 7-7 7 3.13 7 7-3.13 7-7 7z" fill="#5a5a5a"/></svg>
<svg class="r" style="left:47px;top:813.8px" width="10" height="5"><path d="M0 0 L10 0 L5 5Z" fill="#666"/></svg>
<div class="t" style="left:65.5px;top:811.59px;font-size:11px;line-height:13.2px;font-weight:400;color:#9d9d9d;">Blocked</div>
<svg class="r" style="left:164.1px;top:810.5999999999999px" width="15" height="15" viewBox="0 0 24 24"><circle cx="12" cy="12" r="12" fill="#a6a6a6"/><rect x="10.6" y="10.4" width="2.8" height="8" fill="#fff"/><rect x="10.6" y="5.6" width="2.8" height="2.8" fill="#fff"/></svg>
<div class="t" style="left:200.2px;top:811.59px;font-size:11px;line-height:13.2px;font-weight:400;color:#262626;">manhuahot.com</div>
<div class="t" style="left:352.5px;top:811.59px;font-size:11px;line-height:13.2px;font-weight:400;color:#262626;">Network</div>
<div class="t" style="left:412.4px;top:811.59px;font-size:11px;line-height:13.2px;font-weight:400;color:#262626;">15,885</div>
<div class="t" style="left:580px;top:811.59px;font-size:11px;line-height:13.2px;font-weight:400;color:#262626;">5033848</div>
<div class="t" style="left:732px;top:811.59px;font-size:11px;line-height:13.2px;font-weight:400;color:#262626;">300x250</div>
<div class="t" style="left:899.3px;top:811.59px;font-size:11px;line-height:13.2px;font-weight:400;color:#262626;">126</div>
<svg class="r" style="left:1115.7px;top:810.3px" width="15" height="15" viewBox="0 0 24 24"><circle cx="12" cy="12" r="12" fill="#a3a3a3"/><rect x="10.6" y="10.4" width="2.8" height="8" fill="#fff"/><rect x="10.6" y="5.6" width="2.8" height="2.8" fill="#fff"/></svg>
<div class="t" style="left:1243.5px;top:811.59px;font-size:11px;line-height:13.2px;font-weight:400;color:#262626;">Default</div>
<svg class="r" style="left:1293px;top:809px" width="16" height="16"><rect x="0" y="0" width="16" height="16" rx="2" fill="#0772b8"/><path d="M3.1 8.6 L6 11.5 L13.4 4.3" stroke="#fff" stroke-width="1.6" fill="none"/></svg>
<div class="r" style="left:1436px;top:803px;width:36px;height:30px;background:#0071b8;border-radius:50%;"></div>
<div class="t" style="left:1450.3px;top:810.64px;font-size:12px;line-height:14.4px;font-weight:700;color:#ffffff;">0</div>
<div class="r" style="left:15px;top:837px;width:1608px;height:40px;background:#fafafa;"></div>
<svg class="r" style="left:17.6px;top:845.8px" width="24" height="24" viewBox="0 0 24 24"><path d="M12 8c-2.21 0-4 1.79-4 4s1.79 4 4 4 4-1.79 4-4-1.79-4-4-4zm8.94 3A8.994 8.994 0 0013 3.06V1h-2v2.06A8.994 8.994 0 003.06 11H1v2h2.06A8.994 8.994 0 0011 20.94V23h2v-2.06A8.994 8.994 0 0020.94 13H23v-2h-2.06zM12 19c-3.87 0-7-3.13-7-7s3.13-7 7-7 7 3.13 7 7-3.13 7-7 7z" fill="#5a5a5a"/></svg>
<svg class="r" style="left:47px;top:853.8px" width="10" height="5"><path d="M0 0 L10 0 L5 5Z" fill="#666"/></svg>
<div class="t" style="left:65.5px;top:851.59px;font-size:11px;line-height:13.2px;font-weight:400;color:#9d9d9d;">Blocked</div>
<svg class="r" style="left:164.1px;top:850.5999999999999px" width="15" height="15" viewBox="0 0 24 24"><circle cx="12" cy="12" r="12" fill="#a6a6a6"/><rect x="10.6" y="10.4" width="2.8" height="8" fill="#fff"/><rect x="10.6" y="5.6" width="2.8" height="2.8" fill="#fff"/></svg>
<div class="t" style="left:200.2px;top:851.59px;font-size:11px;line-height:13.2px;font-weight:400;color:#262626;">Megaup.net</div>
<div class="t" style="left:352.5px;top:851.59px;font-size:11px;line-height:13.2px;font-weight:400;color:#262626;">Website</div>
<div class="t" style="left:412.4px;top:851.59px;font-size:11px;line-height:13.2px;font-weight:400;color:#262626;">5,949</div>
<div class="t" style="left:580px;top:851.59px;font-size:11px;line-height:13.2px;font-weight:400;color:#262626;">4464186</div>
<div class="t" style="left:732px;top:851.59px;font-size:11px;line-height:13.2px;font-weight:400;color:#262626;">300x250 - Header</div>
<div class="t" style="left:899.3px;top:851.59px;font-size:11px;line-height:13.2px;font-weight:400;color:#262626;">91</div>
<svg class="r" style="left:1115.7px;top:850.3px" width="15" height="15" viewBox="0 0 24 24"><circle cx="12" cy="12" r="12" fill="#a3a3a3"/><rect x="10.6" y="10.4" width="2.8" height="8" fill="#fff"/><rect x="10.6" y="5.6" width="2.8" height="2.8" fill="#fff"/></svg>
<div class="t" style="left:1243.5px;top:851.59px;font-size:11px;line-height:13.2px;font-weight:400;color:#262626;">Default</div>
<svg class="r" style="left:1293px;top:849px" width="16" height="16"><rect x="0" y="0" width="16" height="16" rx="2" fill="#0772b8"/><path d="M3.1 8.6 L6 11.5 L13.4 4.3" stroke="#fff" stroke-width="1.6" fill="none"/></svg>
<div class="r" style="left:1436px;top:843px;width:36px;height:30px;background:#0071b8;border-radius:50%;"></div>
<div class="t" style="left:1450.3px;top:850.64px;font-size:12px;line-height:14.4px;font-weight:700;color:#ffffff;">0</div>
<div class="r" style="left:15px;top:877px;width:1608px;height:40px;background:#eeeeee;"></div>
<svg class="r" style="left:17.6px;top:885.8px" width="24" height="24" viewBox="0 0 24 24"><path d="M12 8c-2.21 0-4 1.79-4 4s1.79 4 4 4 4-1.79 4-4-1.79-4-4-4zm8.94 3A8.994 8.994 0 0013 3.06V1h-2v2.06A8.994 8.994 0 003.06 11H1v2h2.06A8.994 8.994 0 0011 20.94V23h2v-2.06A8.994 8.994 0 0020.94 13H23v-2h-2.06zM12 19c-3.87 0-7-3.13-7-7s3.13-7 7-7 7 3.13 7 7-3.13 7-7 7z" fill="#5a5a5a"/></svg>
<svg class="r" style="left:47px;top:893.8px" width="10" height="5"><path d="M0 0 L10 0 L5 5Z" fill="#666"/></svg>
<div class="t" style="left:65.5px;top:891.59px;font-size:11px;line-height:13.2px;font-weight:400;color:#9d9d9d;">Blocked</div>
<svg class="r" style="left:164.1px;top:890.5999999999999px" width="15" height="15" viewBox="0 0 24 24"><circle cx="12" cy="12" r="12" fill="#d9d9d9"/><rect x="10.6" y="10.4" width="2.8" height="8" fill="#fff"/><rect x="10.6" y="5.6" width="2.8" height="2.8" fill="#fff"/></svg>
<div class="t" style="left:200.2px;top:891.59px;font-size:11px;line-height:13.2px;font-weight:400;color:#262626;">chapmanganelo.com</div>
<div class="t" style="left:352.5px;top:891.59px;font-size:11px;line-height:13.2px;font-weight:400;color:#262626;">Website</div>
<div class="t" style="left:412.4px;top:891.59px;font-size:11px;line-height:13.2px;font-weight:400;color:#262626;">1,079</div>
<div class="t" style="left:580px;top:891.59px;font-size:11px;line-height:13.2px;font-weight:400;color:#262626;">5222566</div>
<div class="t" style="left:732px;top:891.59px;font-size:11px;line-height:13.2px;font-weight:400;color:#262626;">300x250</div>
<div class="t" style="left:899.3px;top:891.59px;font-size:11px;line-height:13.2px;font-weight:400;color:#262626;">77</div>
<svg class="r" style="left:1115.7px;top:890.3px" width="15" height="15" viewBox="0 0 24 24"><circle cx="12" cy="12" r="12" fill="#a3a3a3"/><rect x="10.6" y="10.4" width="2.8" height="8" fill="#fff"/><rect x="10.6" y="5.6" width="2.8" height="2.8" fill="#fff"/></svg>
<div class="t" style="left:1243.5px;top:891.59px;font-size:11px;line-height:13.2px;font-weight:400;color:#262626;">Default</div>
<svg class="r" style="left:1293px;top:889px" width="16" height="16"><rect x="0" y="0" width="16" height="16" rx="2" fill="#0772b8"/><path d="M3.1 8.6 L6 11.5 L13.4 4.3" stroke="#fff" stroke-width="1.6" fill="none"/></svg>
<div class="r" style="left:1436px;top:883px;width:36px;height:30px;background:#0071b8;border-radius:50%;"></div>
<div class="t" style="left:1450.3px;top:890.64px;font-size:12px;line-height:14.4px;font-weight:700;color:#ffffff;">0</div>
<div class="r" style="left:15px;top:917px;width:1608px;height:40px;background:#fafafa;"></div>
<svg class="r" style="left:17.6px;top:925.8px" width="24" height="24" viewBox="0 0 24 24"><path d="M12 8c-2.21 0-4 1.79-4 4s1.79 4 4 4 4-1.79 4-4-1.79-4-4-4zm8.94 3A8.994 8.994 0 0013 3.06V1h-2v2.06A8.994 8.994 0 003.06 11H1v2h2.06A8.994 8.994 0 0011 20.94V23h2v-2.06A8.994 8.994 0 0020.94 13H23v-2h-2.06zM12 19c-3.87 0-7-3.13-7-7s3.13-7 7-7 7 3.13 7 7-3.13 7-7 7z" fill="#5a5a5a"/></svg>
<svg class="r" style="left:47px;top:933.8px" width="10" height="5"><path d="M0 0 L10 0 L5 5Z" fill="#666"/></svg>
<div class="t" style="left:65.5px;top:931.59px;font-size:11px;line-height:13.2px;font-weight:400;color:#9d9d9d;">Blocked</div>
<svg class="r" style="left:164.1px;top:930.5999999999999px" width="15" height="15" viewBox="0 0 24 24"><circle cx="12" cy="12" r="12" fill="#a6a6a6"/><rect x="10.6" y="10.4" width="2.8" height="8" fill="#fff"/><rect x="10.6" y="5.6" width="2.8" height="2.8" fill="#fff"/></svg>
<div class="t" style="left:200.2px;top:931.59px;font-size:11px;line-height:13.2px;font-weight:400;color:#262626;">mangabuddy.com</div>
<div class="t" style="left:352.5px;top:931.59px;font-size:11px;line-height:13.2px;font-weight:400;color:#262626;">Website</div>
<div class="t" style="left:412.4px;top:931.59px;font-size:11px;line-height:13.2px;font-weight:400;color:#262626;">538</div>
<div class="t" style="left:580px;top:931.59px;font-size:11px;line-height:13.2px;font-weight:400;color:#262626;">4873868</div>
<div class="t" style="left:732px;top:931.59px;font-size:11px;line-height:13.2px;font-weight:400;color:#262626;">300x250</div>
<div class="t" style="left:899.3px;top:931.59px;font-size:11px;line-height:13.2px;font-weight:400;color:#262626;">60</div>
<svg class="r" style="left:1115.7px;top:930.3px" width="15" height="15" viewBox="0 0 24 24"><circle cx="12" cy="12" r="12" fill="#a3a3a3"/><rect x="10.6" y="10.4" width="2.8" height="8" fill="#fff"/><rect x="10.6" y="5.6" width="2.8" height="2.8" fill="#fff"/></svg>
<div class="t" style="left:1243.5px;top:931.59px;font-size:11px;line-height:13.2px;font-weight:400;color:#262626;">Default</div>
<svg class="r" style="left:1293px;top:929px" width="16" height="16"><rect x="0" y="0" width="16" height="16" rx="2" fill="#0772b8"/><path d="M3.1 8.6 L6 11.5 L13.4 4.3" stroke="#fff" stroke-width="1.6" fill="none"/></svg>
<div class="r" style="left:1436px;top:923px;width:36px;height:30px;background:#0071b8;border-radius:50%;"></div>
<div class="t" style="left:1450.3px;top:930.64px;font-size:12px;line-height:14.4px;font-weight:700;color:#ffffff;">0</div>
<div class="r" style="left:15px;top:437px;width:1608px;height:1px;background:#dcdcdc;"></div>
<div class="r" style="left:15px;top:476px;width:1608px;height:1px;background:#dcdcdc;"></div>
<div class="r" style="left:1639px;top:74px;width:280px;height:858px;background:#f9f9f9;border-left:1px solid #e0e0e0;"></div>
<div class="t" style="left:1660px;top:86.20px;font-size:13px;line-height:15.6px;font-weight:700;color:#5a5a5a;letter-spacing:-0.5px;">Campaign Summary</div>
<div class="r" style="left:1640px;top:113px;width:279px;height:1px;background:#dcdcdc;"></div>
<div class="t" style="left:1658px;top:129.30px;font-size:15px;line-height:18.0px;font-weight:700;color:#5b5b5b;letter-spacing:-0.55px;">General Details</div>
<div class="t" style="left:1658px;top:158.94px;font-size:12px;line-height:14.4px;font-weight:400;color:#9e9e9e;">Name</div>
<svg class="r" style="left:1795.0px;top:156.5px" width="15" height="15" viewBox="0 0 24 24"><circle cx="12" cy="12" r="12" fill="#a5a5a5"/><rect x="10.6" y="10.4" width="2.8" height="8" fill="#fff"/><rect x="10.6" y="5.6" width="2.8" height="2.8" fill="#fff"/></svg>
<div class="t" style="right:14.4px;top:158.39px;font-size:11px;line-height:13.2px;font-weight:700;color:#1c1c1c;letter-spacing:-0.35px;">Testing Campaign</div>
<div class="t" style="left:1658px;top:183.64px;font-size:12px;line-height:14.4px;font-weight:400;color:#9e9e9e;">Group</div>
<div class="t" style="right:14.4px;top:182.59px;font-size:11px;line-height:13.2px;font-weight:700;color:#1c1c1c;letter-spacing:-0.35px;">No Group</div>
<div class="t" style="left:1658px;top:208.14px;font-size:12px;line-height:14.4px;font-weight:400;color:#9e9e9e;">Format</div>
<div class="t" style="right:14.4px;top:206.59px;font-size:11px;line-height:13.2px;font-weight:700;color:#1c1c1c;letter-spacing:-0.35px;">Banner - 300x250</div>
<div class="t" style="left:1658px;top:232.64px;font-size:12px;line-height:14.4px;font-weight:400;color:#9e9e9e;">Categories</div>
<svg class="r" style="left:1737.5px;top:253.5px" width="15" height="15" viewBox="0 0 24 24"><circle cx="12" cy="12" r="12" fill="#a5a5a5"/><rect x="10.6" y="10.4" width="2.8" height="8" fill="#fff"/><rect x="10.6" y="5.6" width="2.8" height="2.8" fill="#fff"/></svg>
<div class="t" style="right:14.4px;top:254.59px;font-size:11px;line-height:13.2px;font-weight:700;color:#1c1c1c;letter-spacing:-0.35px;">Entertainment &amp; Lifestyle: ALL</div>
<div class="t" style="left:1658px;top:287.24px;font-size:12px;line-height:14.4px;font-weight:400;color:#9e9e9e;">Campaign Type</div>
<div class="t" style="left:1658px;top:335.10px;font-size:15px;line-height:18.0px;font-weight:700;color:#5b5b5b;letter-spacing:-0.55px;">Ad Variations</div>
<div class="t" style="left:1658px;top:364.94px;font-size:12px;line-height:14.4px;font-weight:400;color:#9e9e9e;">Variations</div>
<div class="t" style="right:14.4px;top:363.29px;font-size:11px;line-height:13.2px;font-weight:700;color:#1c1c1c;letter-spacing:-0.35px;">1</div>
<div class="t" style="left:1658px;top:388.94px;font-size:12px;line-height:14.4px;font-weight:400;color:#9e9e9e;">Distribution Algorithm</div>
<div class="t" style="right:14.4px;top:387.59px;font-size:11px;line-height:13.2px;font-weight:700;color:#1c1c1c;letter-spacing:-0.35px;">Automatic on CTR</div>
<div class="t" style="left:1658px;top:437.10px;font-size:15px;line-height:18.0px;font-weight:700;color:#5b5b5b;letter-spacing:-0.55px;">Targeting &amp; Advanced</div>
<div class="t" style="left:1658px;top:466.64px;font-size:12px;line-height:14.4px;font-weight:400;color:#9e9e9e;">Country or Region</div>
<svg class="r" style="left:1831.8px;top:464.5px" width="15" height="15" viewBox="0 0 24 24"><circle cx="12" cy="12" r="12" fill="#a5a5a5"/><rect x="10.6" y="10.4" width="2.8" height="8" fill="#fff"/><rect x="10.6" y="5.6" width="2.8" height="2.8" fill="#fff"/></svg>
<div class="t" style="right:14.4px;top:465.79px;font-size:11px;line-height:13.2px;font-weight:700;color:#1c1c1c;letter-spacing:-0.35px;">1 Targeted</div>
<div class="t" style="left:1658px;top:514.80px;font-size:15px;line-height:18.0px;font-weight:700;color:#5b5b5b;letter-spacing:-0.55px;">Pricing</div>
<div class="t" style="left:1658px;top:544.39px;font-size:12px;line-height:14.4px;font-weight:400;color:#9e9e9e;">Pricing Model</div>
<div class="t" style="left:1658px;top:568.34px;font-size:12px;line-height:14.4px;font-weight:400;color:#9e9e9e;">Price</div>
<div class="t" style="right:14.4px;top:567.59px;font-size:11px;line-height:13.2px;font-weight:700;color:#1c1c1c;letter-spacing:-0.35px;">€0.1</div>
<div class="t" style="left:1658px;top:593.34px;font-size:12px;line-height:14.4px;font-weight:400;color:#9e9e9e;">Budget Type</div>
<div class="t" style="right:14.4px;top:592.59px;font-size:11px;line-height:13.2px;font-weight:400;color:#a0a0a0;">None</div>
<div class="t" style="left:1658px;top:617.64px;font-size:12px;line-height:14.4px;font-weight:400;color:#9e9e9e;">Frequency Capping</div>
<div class="t" style="right:14.4px;top:617.09px;font-size:11px;line-height:13.2px;font-weight:400;color:#a0a0a0;">Disabled</div>
<div class="t" style="left:1658px;top:643.04px;font-size:12px;line-height:14.4px;font-weight:400;color:#9e9e9e;">Bidder</div>
<div class="r" style="left:1640px;top:675px;width:279px;height:98px;background:#e5f0f6;"></div>
<div class="t" style="left:1658px;top:689.60px;font-size:15px;line-height:18.0px;font-weight:700;color:#5b5b5b;letter-spacing:-0.55px;">Sites &amp; Zones</div>
<div class="t" style="left:1658px;top:719.64px;font-size:12px;line-height:14.4px;font-weight:400;color:#9e9e9e;">Traffic Type</div>
<div class="t" style="left:1658px;top:744.64px;font-size:12px;line-height:14.4px;font-weight:400;color:#9e9e9e;">Targeting</div>
<div class="r" style="left:1640px;top:773px;width:279px;height:1px;background:#e0e0e0;"></div>
<div class="r" style="left:1640px;top:774px;width:279px;height:48px;background:#ffffff;"></div>
<div class="r" style="left:1640px;top:822px;width:279px;height:2px;background:#e3e3e3;"></div>
<div class="r" style="left:1640px;top:824px;width:279px;height:48px;background:#ffffff;"></div>
<div class="r" style="left:1640px;top:872px;width:279px;height:1px;background:#d6d6d6;"></div>
<div class="r" style="left:1640px;top:931px;width:279px;height:1px;background:#dcdcdc;"></div>
<div class="t" style="left:1658px;top:789.00px;font-size:15px;line-height:18.0px;font-weight:700;color:#5b5b5b;letter-spacing:-0.55px;">Status</div>
<div class="t" style="left:1658px;top:838.60px;font-size:15px;line-height:18.0px;font-weight:700;color:#5b5b5b;letter-spacing:-0.4px;">Traffic Estimates</div>
<svg class="r" style="left:1892px;top:796px" width="12" height="8"><path d="M1 1 L6 6 L11 1" stroke="#555" stroke-width="1.8" fill="none"/></svg>
<svg class="r" style="left:1889px;top:846px" width="12" height="8"><path d="M1 1 L6 6 L11 1" stroke="#555" stroke-width="1.8" fill="none"/></svg>
<div class="r" style="left:1837px;top:285px;width:67.6px;height:21.5px;background:#0071b8;border-radius:12px;"></div>
<div class="t" style="left:1837px;top:285px;width:67.6px;height:21.5px;line-height:21.5px;text-align:center;font-size:11px;font-weight:700;color:#fff;letter-spacing:-0.3px">Standard</div>
<div class="r" style="left:1824px;top:543.4px;width:80.6px;height:20.100000000000023px;background:#0071b8;border-radius:12px;"></div>
<div class="t" style="left:1824px;top:543.4px;width:80.6px;height:20.100000000000023px;line-height:20.100000000000023px;text-align:center;font-size:11px;font-weight:700;color:#fff;letter-spacing:-0.3px">Smart CPM</div>
<div class="r" style="left:1838px;top:641px;width:66.6px;height:21px;background:#0071b8;border-radius:12px;"></div>
<div class="t" style="left:1838px;top:641px;width:66.6px;height:21px;line-height:21px;text-align:center;font-size:11px;font-weight:700;color:#fff;letter-spacing:-0.3px">Disabled</div>
<div class="r" style="left:1850px;top:743px;width:54.6px;height:22px;background:#0071b8;border-radius:12px;"></div>
<div class="t" style="left:1850px;top:743px;width:54.6px;height:22px;line-height:22px;text-align:center;font-size:11px;font-weight:700;color:#fff;letter-spacing:-0.3px">Target</div>
<div class="r" style="left:1655px;top:888px;width:40px;height:32px;background:#0071b8;border-radius:3px;"></div>
<svg class="r" style="left:1669px;top:897px" width="12" height="14"><path d="M8.5 2 L3.5 7 L8.5 12" stroke="#fff" stroke-width="2.4" fill="none"/></svg>
<div class="r" style="left:1710px;top:888px;width:140px;height:32px;background:#57ae56;border-radius:3px;"></div>
<div class="t" style="left:1756.8px;top:896.64px;font-size:12px;line-height:14.4px;font-weight:700;color:#ffffff;letter-spacing:-0.2px;">CREATE</div>
<div class="r" style="left:1865px;top:888px;width:40px;height:32px;background:#c3c3c3;border-radius:3px;"></div>
<svg class="r" style="left:1879px;top:897px" width="12" height="14"><path d="M3.5 2 L8.5 7 L3.5 12" stroke="#fff" stroke-width="2.4" fill="none"/></svg>
</div></body></html>
